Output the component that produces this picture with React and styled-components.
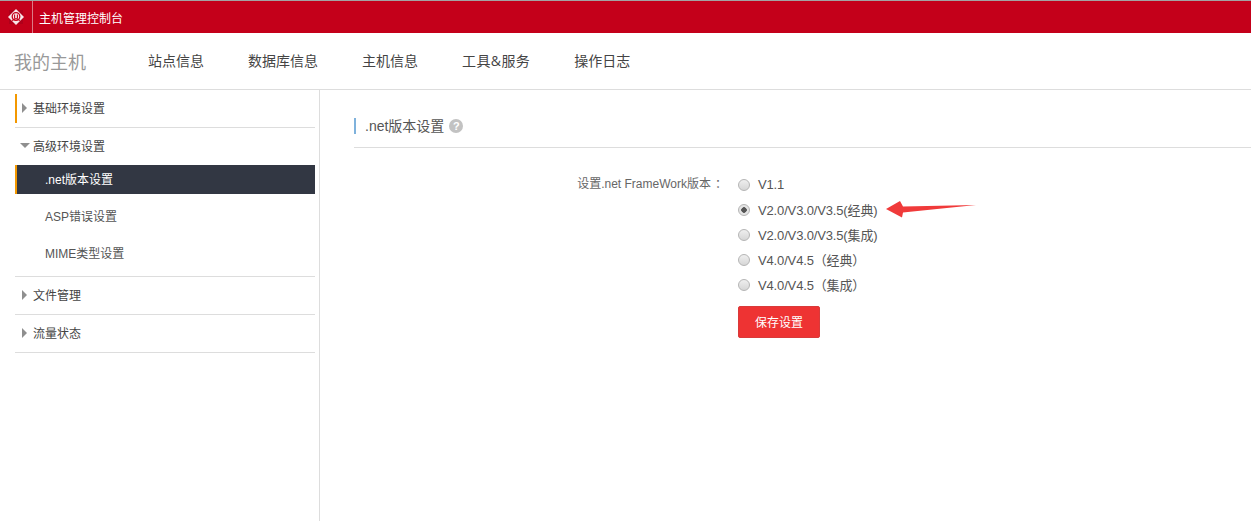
import styled, { createGlobalStyle } from "styled-components";

const FONT = `"Liberation Sans", "Noto Sans CJK SC", sans-serif`;

const versions = [
  "V1.1",
  "V2.0/V3.0/V3.5(经典)",
  "V2.0/V3.0/V3.5(集成)",
  "V4.0/V4.5（经典）",
  "V4.0/V4.5（集成）",
];

export default function App() {
  return (
    <Page>
      <Global />
      <TopBar>
        <LogoBox>
          <svg width="16" height="16" viewBox="0 0 16 16">
            <rect x="1" y="1" width="14" height="14" fill="#b0001a" />
            <path d="M8 0L16 8L8 16L0 8Z" fill="#f8e6e8" />
            <circle cx="8" cy="7.5" r="3.8" fill="none" stroke="#c4001a" strokeWidth="1.3" />
            <path d="M6.6 5.5V9.5M9.4 5.5V9.5M4 11.5L8 9.5L12 11.5" fill="none" stroke="#c4001a" strokeWidth="1.1" />
          </svg>
        </LogoBox>
        <AppTitle>主机管理控制台</AppTitle>
      </TopBar>
      <Nav>
        <Brand>我的主机</Brand>
        <NavLinks>
          <NavLink>站点信息</NavLink>
          <NavLink>数据库信息</NavLink>
          <NavLink>主机信息</NavLink>
          <NavLink $wide>工具&amp;服务</NavLink>
          <NavLink>操作日志</NavLink>
        </NavLinks>
      </Nav>
      <Body>
        <Sidebar>
          <Group $height={38} $pad={4}>
            <GroupHead $accent $height={29}>
              <Caret />
              基础环境设置
            </GroupHead>
          </Group>
          <Group $height={149}>
            <GroupHead $height={37}>
              <Caret $open />
              高级环境设置
            </GroupHead>
            <SubItem $active>.net版本设置</SubItem>
            <SubItem>ASP错误设置</SubItem>
            <SubItem>MIME类型设置</SubItem>
          </Group>
          <Group $height={38}>
            <GroupHead $height={37}>
              <Caret />
              文件管理
            </GroupHead>
          </Group>
          <Group $height={38}>
            <GroupHead $height={37}>
              <Caret />
              流量状态
            </GroupHead>
          </Group>
        </Sidebar>
        <Main>
          <SectionHead>
            <SectionTitle>.net版本设置</SectionTitle>
            <Help>?</Help>
          </SectionHead>
          <Form>
            <FormLabel>
              设置.net FrameWork版本<Colon>：</Colon>
            </FormLabel>
            <Options>
              {versions.map((v, i) => (
                <Option key={v}>
                  <Radio $checked={i === 1} />
                  <span>{v}</span>
                  {i === 1 && (
                    <ArrowMark width="90" height="17" viewBox="0 0 90 17">
                      <path d="M0 8L14 0L17 5.5L90 4L17 11.5L16 16.5Z" fill="#f03a3a" />
                    </ArrowMark>
                  )}
                </Option>
              ))}
              <SaveButton>保存设置</SaveButton>
            </Options>
          </Form>
        </Main>
      </Body>
    </Page>
  );
}

const Global = createGlobalStyle`
  html, body {
    margin: 0;
    padding: 0;
    background: #fff;
  }
  body {
    font-family: ${FONT};
    overflow: hidden;
  }
`;

const Page = styled.div`
  width: 1251px;
  height: 521px;
  overflow: hidden;
  display: flex;
  flex-direction: column;
`;

const TopBar = styled.div`
  height: 32px;
  flex: none;
  display: flex;
  align-items: center;
  background: #c4001a;
  border-top: 1px solid #a3a3a3;
`;

const LogoBox = styled.div`
  width: 33px;
  height: 32px;
  box-sizing: border-box;
  display: flex;
  align-items: center;
  justify-content: center;
  border-right: 1px solid #dc7a86;
`;

const AppTitle = styled.div`
  margin-left: 6px;
  font-size: 12px;
  color: #fff;
`;

const Nav = styled.div`
  height: 56px;
  flex: none;
  display: flex;
  align-items: center;
  border-bottom: 1px solid #ddd;
  padding-left: 14px;
`;

const Brand = styled.div`
  width: 134px;
  font-size: 18px;
  color: #999;
`;

const NavLinks = styled.div`
  display: flex;
  gap: 44px;
  margin-bottom: 2px;
`;

const NavLink = styled.div`
  font-family: "Open Sans", "Noto Sans CJK SC", sans-serif;
  font-size: 14px;
  letter-spacing: ${(p) => (p.$wide ? "0.4px" : "0")};
  color: #444;
`;

const Body = styled.div`
  flex: 1;
  display: flex;
  min-height: 0;
`;

const Sidebar = styled.div`
  width: 320px;
  flex: none;
  box-sizing: border-box;
  padding: 0 4px 0 15px;
  border-right: 1px solid #ddd;
`;

const Group = styled.div`
  height: ${(p) => p.$height}px;
  box-sizing: border-box;
  padding-top: ${(p) => p.$pad || 0}px;
  border-bottom: 1px solid #ddd;
`;

const GroupHead = styled.div`
  height: ${(p) => p.$height}px;
  box-sizing: border-box;
  display: flex;
  align-items: center;
  padding-left: ${(p) => (p.$accent ? 3 : 5)}px;
  padding-bottom: 2px;
  border-left: ${(p) => (p.$accent ? "2px solid #f39800" : "none")};
  font-size: 12px;
  color: #444;
`;

const Caret = styled.i`
  width: 0;
  height: 0;
  margin-left: ${(p) => (p.$open ? 0 : 2)}px;
  margin-right: ${(p) => (p.$open ? 3 : 6)}px;
  border-style: solid;
  border-color: transparent;
  ${(p) =>
    p.$open
      ? `border-width: 5px 5px 0 5px; border-top-color: #8f8f8f;`
      : `border-width: 5px 0 5px 5px; border-left-color: #8f8f8f;`}
`;

const SubItem = styled.div`
  height: 29px;
  margin-bottom: 8px;
  box-sizing: border-box;
  display: flex;
  align-items: center;
  padding-left: ${(p) => (p.$active ? 28 : 30)}px;
  padding-bottom: 2px;
  font-size: 12px;
  color: ${(p) => (p.$active ? "#fff" : "#555")};
  background: ${(p) => (p.$active ? "#323743" : "transparent")};
  border-left: ${(p) => (p.$active ? "2px solid #f39800" : "none")};
`;

const Main = styled.div`
  flex: 1;
  min-width: 0;
  padding: 0 0 0 34px;
`;

const SectionHead = styled.div`
  height: 58px;
  box-sizing: border-box;
  display: flex;
  align-items: center;
  padding-top: 15px;
  border-bottom: 1px solid #ddd;
`;

const SectionTitle = styled.div`
  height: 16px;
  line-height: 16px;
  padding-left: 9px;
  border-left: 2px solid #7fb2dc;
  font-size: 14px;
  color: #555;
`;

const Help = styled.span`
  width: 14px;
  height: 14px;
  margin-left: 5px;
  border-radius: 50%;
  background: #c2c2c2;
  color: #fff;
  font-size: 11px;
  font-weight: 700;
  line-height: 14px;
  text-align: center;
`;

const Form = styled.div`
  display: flex;
  padding-top: 24px;
`;

const FormLabel = styled.div`
  width: 373px;
  height: 24px;
  text-align: right;
  font-size: 12px;
  line-height: 25px;
  color: #666;
`;

const Colon = styled.span`
  margin-left: 4px;
`;

const Options = styled.div`
  margin-left: 11px;
  display: flex;
  flex-direction: column;
`;

const Option = styled.div`
  position: relative;
  height: 25px;
  display: flex;
  align-items: center;
  gap: 8px;
  font-size: 13px;
  letter-spacing: -0.15px;
  color: #555;
`;

const Radio = styled.i`
  width: 12px;
  height: 12px;
  box-sizing: border-box;
  border-radius: 50%;
  border: 1px solid #b5b5b5;
  background: ${(p) =>
    p.$checked
      ? "radial-gradient(circle, #555 0 2.5px, #e4e4e4 3px)"
      : "linear-gradient(#efefef, #d6d6d6)"};
`;

const ArrowMark = styled.svg`
  position: absolute;
  left: 148px;
  top: 4px;
`;

const SaveButton = styled.button`
  width: 82px;
  height: 32px;
  margin-top: 9px;
  padding: 0 0 2px;
  border: 1px solid #d93a3a;
  border-radius: 2px;
  background: #ee3333;
  color: #fff;
  font-family: ${FONT};
  font-size: 12px;
`;
